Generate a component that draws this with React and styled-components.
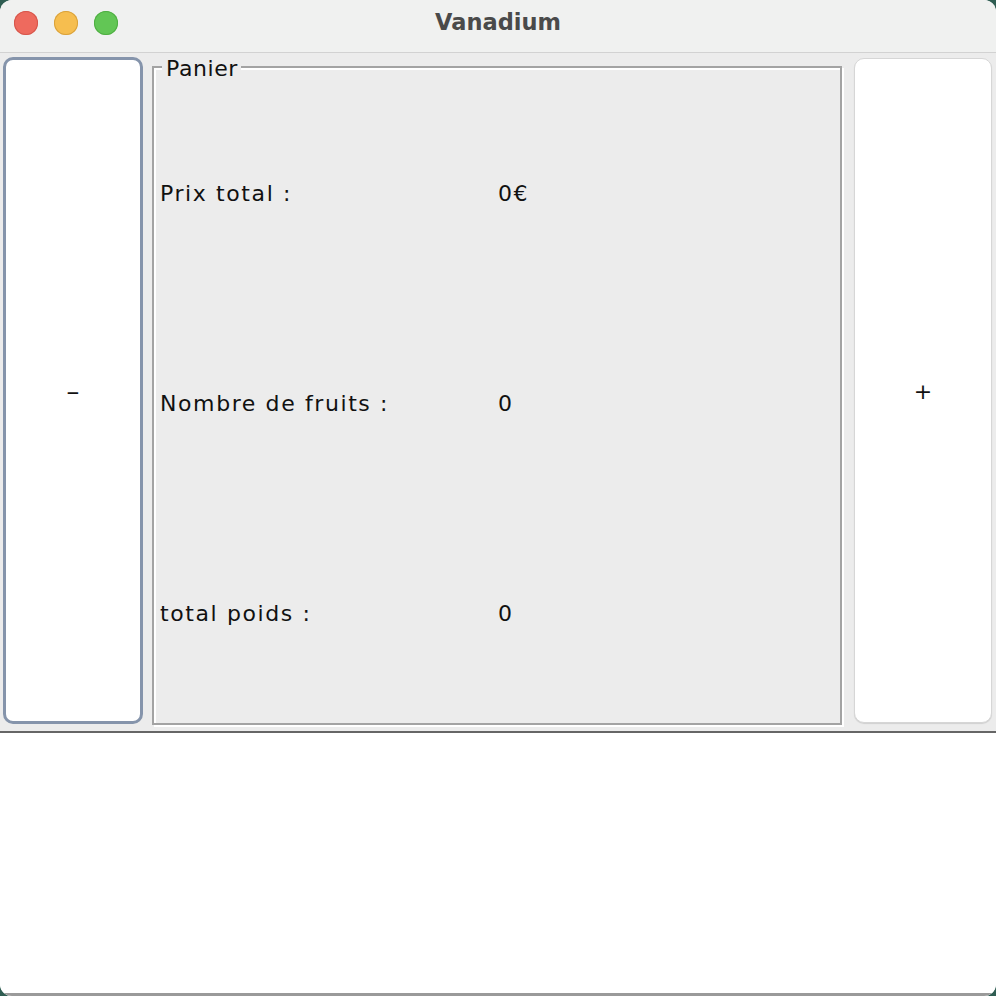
import React from "react";
import styled, { createGlobalStyle } from "styled-components";

const Global = createGlobalStyle`
  html, body { margin: 0; padding: 0; }
  body {
    background: #2f5d52;
    font-family: "DejaVu Sans", "Liberation Sans", sans-serif;
  }
  #root { width: 996px; height: 996px; }
`;

const Window = styled.div`
  width: 996px;
  height: 996px;
  border-radius: 12px;
  overflow: hidden;
  display: flex;
  flex-direction: column;
  background: #ffffff;
`;

const TitleBar = styled.div`
  height: 52px;
  flex: 0 0 52px;
  background: #f0f1f0;
  border-bottom: 1px solid #d2d2d2;
  display: flex;
  align-items: center;
  position: relative;
  padding-left: 14px;
  box-sizing: content-box;
`;

const Lights = styled.div`
  display: flex;
  gap: 16px;
  margin-top: -6px;
`;

const Light = styled.span`
  width: 24px;
  height: 24px;
  border-radius: 50%;
  background: ${(p) => p.$c};
  box-shadow: inset 0 0 0 1px ${(p) => p.$b};
`;

const Title = styled.div`
  position: absolute;
  left: 0;
  right: 0;
  top: 9px;
  text-align: center;
  font-family: "DejaVu Sans", sans-serif;
  font-weight: bold;
  font-size: 22.5px;
  color: #4a4a4a;
  pointer-events: none;
`;

const Content = styled.div`
  height: 678px;
  flex: 0 0 678px;
  background: #ececec;
  border-bottom: 2px solid #666666;
  display: flex;
  align-items: stretch;
`;

const SideButton = styled.button`
  box-sizing: border-box;
  width: ${(p) => p.$w}px;
  margin: ${(p) => p.$m};
  background: #ffffff;
  border-radius: 10px;
  border: ${(p) => (p.$focus ? "3px solid #8594ab" : "1px solid #d6d6d6")};
  box-shadow: ${(p) => (p.$focus ? "none" : "0 1px 1px rgba(0,0,0,0.12)")};
  font-family: "DejaVu Sans", sans-serif;
  font-size: 22px;
  color: #111;
  display: flex;
  align-items: center;
  justify-content: center;
  padding: 0;
  padding-top: 2px;
`;

const Glyph = styled.span`
  display: inline-block;
  transform: scaleX(${(p) => p.$sx || 1});
`;

const Panel = styled.div`
  position: relative;
  box-sizing: border-box;
  width: 690px;
  margin: 13px 0 6px 9px;
  border: 2px solid #a3a3a3;
  box-shadow: inset 2px 2px 0 #ffffff, 2px 2px 0 #ffffff;
  padding: 20px 6px 5px 6px;
  display: grid;
  grid-template-columns: 338px 338px;
  grid-template-rows: 1fr 1fr 1fr;
`;

const Legend = styled.div`
  position: absolute;
  top: -12px;
  left: 8px;
  padding: 0 3px 0 4px;
  background: #ececec;
  font-size: 22px;
  letter-spacing: 0.6px;
  color: #111;
  line-height: 26px;
`;

const Cell = styled.div`
  display: flex;
  align-items: center;
  font-size: 22px;
  letter-spacing: 1.6px;
  color: #111;
`;

const Bottom = styled.div`
  flex: 1;
  background: #ffffff;
  border-bottom: 3px solid #9a9a9a;
`;

const rows = [
  ["Prix total :", "0€"],
  ["Nombre de fruits :", "0"],
  ["total poids :", "0"],
];

export default function App() {
  return (
    <>
      <Global />
      <Window>
        <TitleBar>
          <Lights>
            <Light $c="#ee6a5e" $b="#d5574c" />
            <Light $c="#f6be4f" $b="#d9a23c" />
            <Light $c="#62c655" $b="#4fae43" />
          </Lights>
          <Title>Vanadium</Title>
        </TitleBar>
        <Content>
          <SideButton $w={140} $m="4px 0 7px 3px" $focus>
            <Glyph $sx={1.8}>-</Glyph>
          </SideButton>
          <Panel>
            <Legend>Panier</Legend>
            {rows.map(([l, v]) => (
              <React.Fragment key={l}>
                <Cell>{l}</Cell>
                <Cell>{v}</Cell>
              </React.Fragment>
            ))}
          </Panel>
          <SideButton $w={138} $m="5px 4px 8px 12px">
            <Glyph>+</Glyph>
          </SideButton>
        </Content>
        <Bottom />
      </Window>
    </>
  );
}
